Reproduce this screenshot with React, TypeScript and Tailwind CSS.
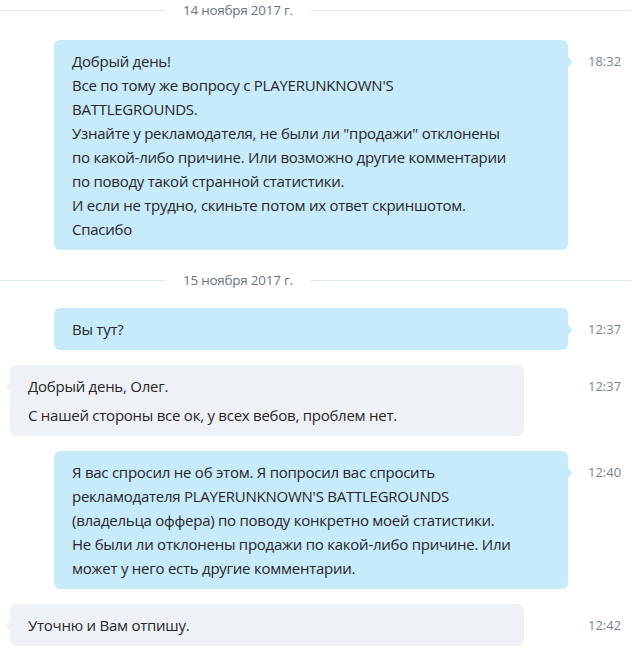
import React from 'react';

type Msg = {
  mine: boolean;
  time: string;
  paragraphs: string[][];
};

const font = { fontFamily: '"Open Sans", "Noto Sans", sans-serif' };

const DateLine: React.FC<{ label: string }> = ({ label }) => (
  <div className="flex items-center h-5">
    <div className="w-[165px] h-px bg-[#dce6ee]" />
    <span className="px-[18px] text-[13.5px] text-[#6b7580] tracking-[-0.25px]">{label}</span>
    <div className="flex-1 h-px bg-[#dce6ee]" />
  </div>
);

const Tail: React.FC<{ side: 'left' | 'right'; color: string }> = ({ side, color }) => (
  <svg
    width="6"
    height="18"
    viewBox="0 0 6 18"
    className={side === 'right' ? 'absolute top-[13px] right-[-5px]' : 'absolute top-[13px] left-[-5px] -scale-x-100'}
  >
    <path d="M0 0 C0 5 5 7 5 9 C5 11 0 13 0 18 Z" fill={color} />
  </svg>
);

const Bubble: React.FC<{ msg: Msg }> = ({ msg }) => {
  const color = msg.mine ? '#c7ebfb' : '#eef2f7';
  return (
    <div className="flex">
      <div className={msg.mine ? 'w-[588px] pl-[54px]' : 'w-[588px] pl-[10px]'}>
        <div
          className={
            'relative w-[514px] rounded-[6px] pl-[18px] pr-3 pt-[9px] pb-[9px] text-[15px] leading-6 tracking-[-0.25px] text-[#262626] ' +
            (msg.mine ? 'bg-[#c7ebfb]' : 'bg-[#eef2f7]')
          }
        >
          <Tail side={msg.mine ? 'right' : 'left'} color={color} />
          {msg.paragraphs.map((p, i) => (
            <div key={i} className={i > 0 ? 'mt-[5px]' : ''}>
              {p.map((line, j) => (
                <div key={j} className="whitespace-nowrap">{line}</div>
              ))}
            </div>
          ))}
        </div>
      </div>
      <div className="pt-[9px] text-[13px] leading-6 text-[#7b8591]">{msg.time}</div>
    </div>
  );
};

const App: React.FC = () => {
  const first: Msg = {
    mine: true,
    time: '18:32',
    paragraphs: [
      [
        'Добрый день!',
        "Все по тому же вопросу с PLAYERUNKNOWN'S",
        'BATTLEGROUNDS.',
        'Узнайте у рекламодателя, не были ли "продажи" отклонены',
        'по какой-либо причине. Или возможно другие комментарии',
        'по поводу такой странной статистики.',
        'И если не трудно, скиньте потом их ответ скриншотом.',
        'Спасибо',
      ],
    ],
  };

  const rest: Msg[] = [
    { mine: true, time: '12:37', paragraphs: [['Вы тут?']] },
    {
      mine: false,
      time: '12:37',
      paragraphs: [['Добрый день, Олег.'], ['С нашей стороны все ок, у всех вебов, проблем нет.']],
    },
    {
      mine: true,
      time: '12:40',
      paragraphs: [
        [
          'Я вас спросил не об этом. Я попросил вас спросить',
          "рекламодателя PLAYERUNKNOWN'S BATTLEGROUNDS",
          '(владельца оффера) по поводу конкретно моей статистики.',
          'Не были ли отклонены продажи по какой-либо причине. Или',
          'может у него есть другие комментарии.',
        ],
      ],
    },
    { mine: false, time: '12:42', paragraphs: [['Уточню и Вам отпишу.']] },
  ];

  return (
    <div className="w-[631px] h-[655px] bg-white overflow-hidden" style={font}>
      <DateLine label="14 ноября 2017 г." />
      <div className="mt-5">
        <Bubble msg={first} />
      </div>
      <div className="mt-5 mb-[18px]">
        <DateLine label="15 ноября 2017 г." />
      </div>
      <div className="flex flex-col gap-[15px]">
        {rest.map((m, i) => (
          <Bubble key={i} msg={m} />
        ))}
      </div>
    </div>
  );
};

export default App;
